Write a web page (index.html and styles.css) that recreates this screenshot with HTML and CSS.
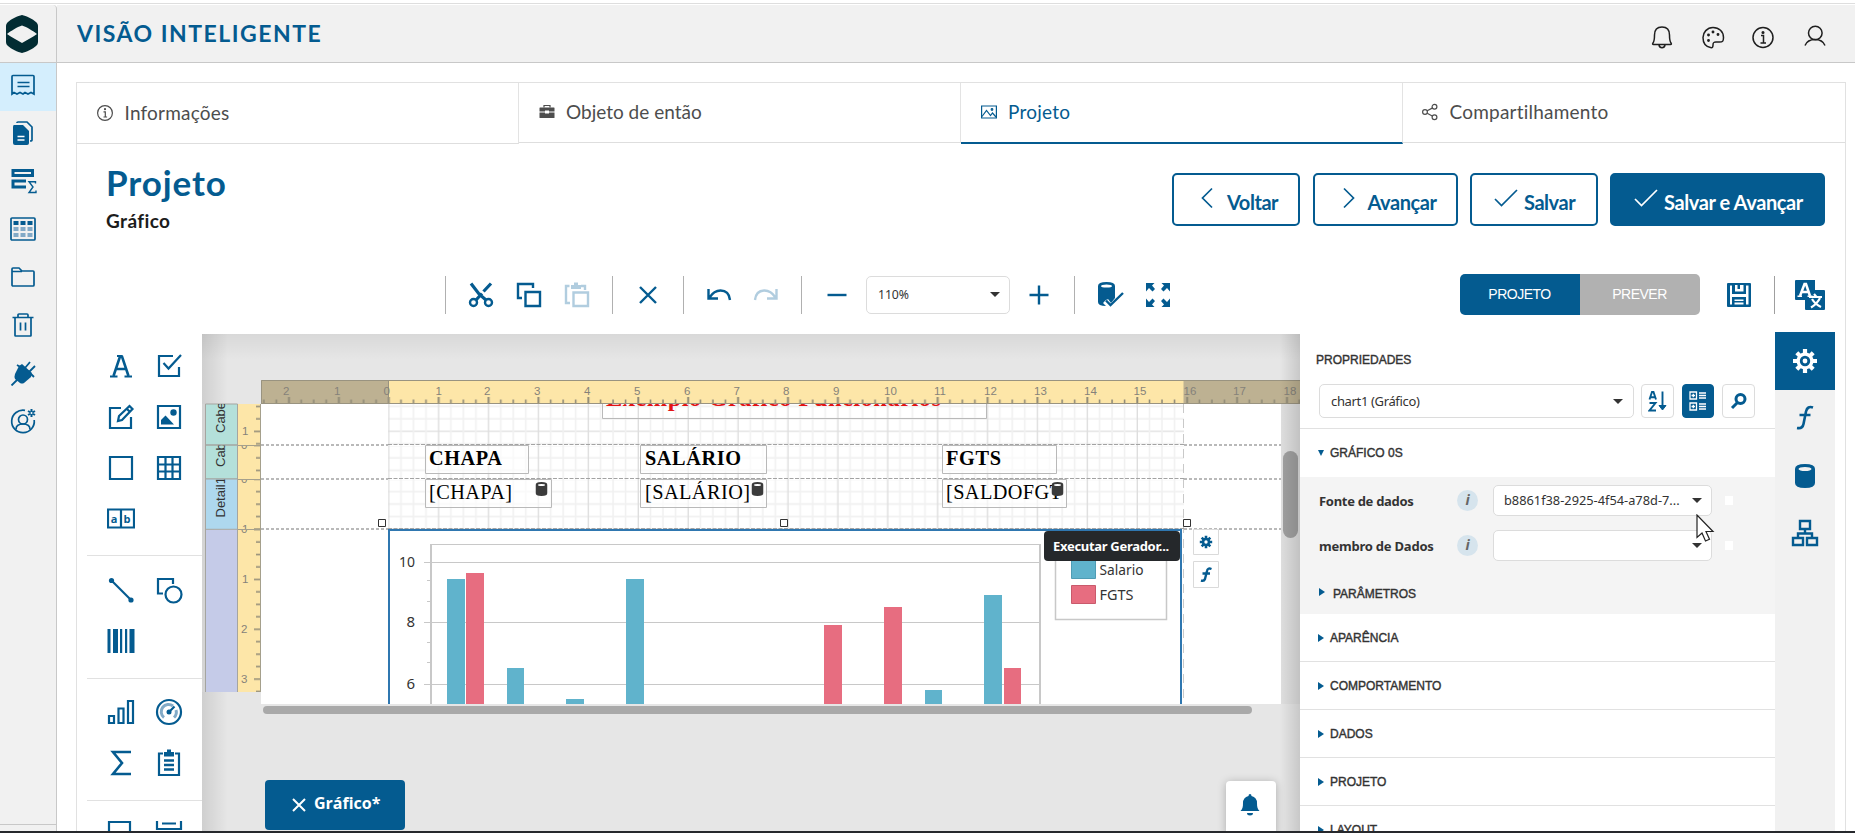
FILE: index.html
```html
<!DOCTYPE html>
<html lang="pt-BR">
<head>
<meta charset="utf-8">
<title>Visão Inteligente</title>
<link rel="stylesheet" href="styles.css">
</head>
<body>
<div class="app">
  <aside class="sidebar">
    <div class="logo">
      <svg width="32" height="38" viewBox="0 0 32 38"><path fill="#022c33" fill-rule="evenodd" d="M16 0C20 1 27 4 30 7c1 1 2 2 2 4v16c0 2-1 3-2 4-3 3-10 6-14 7-4-1-11-4-14-7-1-1-2-2-2-4V11c0-2 1-3 2-4C5 4 12 1 16 0zM1 19c4 3 10 6 15 9 5-3 11-6 15-9-4-3-10-7-15-8.500-5 1.500-11 5.500-15 8.500z"/></svg>
    </div>
    <nav class="side-nav">
      <a class="side-item active"><svg width="26" height="26" viewBox="0 0 26 26" class="ln"><path d="M2 22V4.500q0-1 1-1h20q1 0 1 1V22l-3-1.500-3 1.500-3-1.500-2 1.500-3-1.500-3 1.500-3-1.500z"/><path d="M7.500 10.500h12M7.500 14.500h12"/></svg></a>
      <a class="side-item"><svg width="26" height="26" viewBox="0 0 26 26"><path class="ln" d="M7 3q0-1 1-1h9l5 5v13q0 1-2 1"/><path fill="#045b90" d="M4 5h9l6 6v12q0 2-2 2H5q-2 0-2-2V7q0-2 1-2z"/><path stroke="#fff" stroke-width="1.500" d="M7.500 16.500h7M7.500 20h7"/></svg></a>
      <a class="side-item"><svg width="30" height="28" viewBox="0 0 30 28" fill="none" stroke="#045b90"><path stroke-width="3" d="M5 3.500h19.500v5H5z"/><path stroke-width="3" d="M18 14H5v6h13"/><path stroke-width="1.400" d="M27.500 16.500v-1.800H21l4 5.300-4 5.500h7v-2"/></svg></a>
      <a class="side-item"><svg width="28" height="26" viewBox="0 0 28 26"><rect class="ln" x="2" y="2" width="24" height="22" rx="1"/><path fill="#045b90" d="M4.500 5h5v4h-5zM11.500 5h5v4h-5zM18.500 5h5v4h-5z"/><path fill="#82aac7" d="M4.500 11h5v4h-5zM11.500 11h5v4h-5zM18.500 11h5v4h-5zM4.500 17h5v4h-5zM11.500 17h5v4h-5zM18.500 17h5v4h-5z"/></svg></a>
      <a class="side-item"><svg width="26" height="24" viewBox="0 0 26 24" class="ln"><path d="M2 20V4q0-1 1-1h6l3 3h11q1 0 1 1v13q0 1-1 1H3q-1 0-1-1zM2 6.500h10"/></svg></a>
      <a class="side-item"><svg width="26" height="26" viewBox="0 0 26 26" class="ln"><path d="M2.500 5.500h21M5 5.500v18q0 .5.500.5h15q.5 0 .5-.5v-18M8 5V3q0-1 1-1h8q1 0 1 1v2M10.500 10.500v8M15.500 10.500v8"/></svg></a>
      <a class="side-item"><svg width="26" height="26" viewBox="0 0 26 26"><path fill="#045b90" d="M9 6l3-2 10 9-1 4-7 6q-2 1-4 0l-5-4q-1-2 0-5z"/><path stroke="#045b90" stroke-width="1.800" d="M1.500 25.500l6-6M15 8l5-6M19 12l6-6M7 5l5 3M21 14l3 3"/></svg></a>
      <a class="side-item"><svg width="26" height="26" viewBox="0 0 26 26" class="ln"><path d="M15 2.300A11.300 11.300 0 1 0 24.200 12"/><circle cx="13" cy="11.500" r="4.500"/><path d="M6 21.500q0-5.500 7-5.500t7 5.500"/><path stroke-width="2" d="M21.500 1v8M18 3l7 4M25 3l-7 4"/><circle cx="21.500" cy="5" r="1" fill="#fff" stroke="none"/></svg></a>
    </nav>
    <div class="side-foot"></div>
  </aside>

  <div class="page">
    <header class="topbar">
      <h1 class="brand">VISÃO INTELIGENTE</h1>
      <div class="top-icons">
        <svg width="24" height="26" viewBox="0 0 24 26" class="dk"><path d="M3.500 20.500h17q1.500 0 .5-1.500-1.500-2-1.500-8Q19.500 3 12 3t-7.500 8q0 6-1.500 8-1 1.500.5 1.500zM9 21q.5 2.700 3 2.700t3-2.700"/></svg>
        <svg width="24" height="26" viewBox="0 0 24 26" class="dk"><path d="M9.500 23.500C4.500 22.500 2 18.500 2 13.500S6 3.500 12 3.500s10.500 4 10.500 10c0 4-1 4.500-4 4.500h-3.500c-2.500 0-3 .5-3 3 0 2-.5 3-2.500 2.500z"/><circle cx="7.500" cy="16.500" r=".7"/><circle cx="7.500" cy="11" r=".7"/><circle cx="12" cy="8" r=".7"/><circle cx="17" cy="10.500" r=".7"/></svg>
        <svg width="24" height="26" viewBox="0 0 24 26" class="dk"><circle cx="12" cy="13.500" r="10"/><path d="M10 11.500h2.500V19M9.500 19h5.500"/><circle cx="12" cy="8.500" r=".8"/></svg>
        <svg width="24" height="26" viewBox="0 0 24 26" class="dk user"><circle cx="12.300" cy="10" r="6.800"/><path d="M2 22.500q2.500-6 10-6t10 6"/></svg>
      </div>
    </header>

    <section class="panel">
      <nav class="tabs">
        <a class="tab first"><svg width="16" height="16" viewBox="0 0 16 16" class="gr"><circle cx="8" cy="8" r="7.400"/><path d="M6.500 6.800H8.300v5M6.500 12h3.600"/><circle cx="8" cy="4.200" r=".5"/></svg><span>Informações</span></a>
        <a class="tab"><svg width="16" height="16" viewBox="0 0 16 16" class="case"><path fill="#4d4d4d" d="M1 3.500h14q.5 0 .5.500v3.500H10v-1H6v1H.5V4q0-.5.500-.5zM.5 8.500H6v1h4v-1h5.500v5q0 .5-.5.500H1q-.5 0-.5-.5z"/><path d="M5 3.500v-2h6v2" fill="none" stroke="#4d4d4d" stroke-width="1.200"/></svg><span>Objeto de então</span></a>
        <a class="tab current"><svg width="16" height="16" viewBox="0 0 16 16" class="bl"><path d="M.6 2h14.800v12H.6z"/><path d="M1 12.500l4.500-6 4 5 2-2.500 3.500 4"/><circle cx="11" cy="5.500" r=".8"/></svg><span>Projeto</span></a>
        <a class="tab share"><svg width="16" height="18" viewBox="0 0 16 18" class="gr"><circle cx="3" cy="9" r="2.400"/><circle cx="12.500" cy="3.800" r="2.400"/><circle cx="12.500" cy="14.200" r="2.400"/><path d="M5.200 7.800l5-2.700M5.200 10.300l5 2.700"/></svg><span>Compartilhamento</span></a>
      </nav>

      <div class="titlebar">
        <div class="titles">
          <h2 class="title">Projeto</h2>
          <p class="subtitle">Gráfico</p>
        </div>
        <div class="actions">
          <button class="btn b1"><svg width="14" height="22" viewBox="0 0 14 22"><path d="M12 1.500L2.500 11 12 20.500"/></svg><span>Voltar</span></button>
          <button class="btn b2"><svg width="14" height="22" viewBox="0 0 14 22"><path d="M2 1.500L11.500 11 2 20.500"/></svg><span>Avançar</span></button>
          <button class="btn b3"><svg width="24" height="22" viewBox="0 0 24 22"><path d="M1 12l6.500 6.500L23 3"/></svg><span>Salvar</span></button>
          <button class="btn b4 primary"><svg width="24" height="22" viewBox="0 0 24 22"><path d="M1 12l6.500 6.500L23 3"/></svg><span>Salvar e Avançar</span></button>
        </div>
      </div>

      <div class="toolbar">
        <div class="tb-group g1">
          <svg width="26" height="26" viewBox="0 0 26 26" class="tb"><circle cx="5.500" cy="20.500" r="3.500"/><circle cx="20.500" cy="20.500" r="3.500"/><path stroke-width="3.200" d="M8 18L14 11.500M15.500 9.500L23 1.500M3 1.500L11 12l7 6"/></svg>
          <svg width="26" height="26" viewBox="0 0 26 26" class="tb"><path d="M6 16H2V2h15v4M9.500 10h14.500v14H9.500z"/></svg>
          <svg width="26" height="26" viewBox="0 0 26 26" class="tb dim"><path d="M6 21H2V4h3.500M17 4h4v4M9.500 10.500h14.500v13.500H9.500z"/><path fill="#b1cddf" stroke="none" d="M7 3h3V.5h4V3h3v4H7z"/></svg>
        </div>
        <div class="tb-group g2">
          <svg width="26" height="26" viewBox="0 0 26 26" class="tb"><path d="M5 5l16 16M21 5L5 21"/></svg>
        </div>
        <div class="tb-group g3">
          <svg width="26" height="26" viewBox="0 0 26 26" class="tb"><path d="M2.500 7v9.500H12M3.500 15.500Q8 8.500 14.500 8.500q8.500 0 9.500 9.500"/></svg>
          <svg width="26" height="26" viewBox="0 0 26 26" class="tb dim"><path d="M23.500 7v9.500H14M22.500 15.500Q18 8.500 11.500 8.500 3 8.500 2 18"/></svg>
        </div>
        <div class="tb-group g4">
          <svg width="20" height="26" viewBox="0 0 20 26" class="tb"><path d="M.5 13h19"/></svg>
          <div class="select zoom">110%<i class="caret"></i></div>
          <svg width="20" height="26" viewBox="0 0 20 26" class="tb"><path d="M.5 13h19M10 3.500v19"/></svg>
        </div>
        <div class="tb-group g5">
          <svg width="26" height="26" viewBox="0 0 26 26"><path fill="#045b90" d="M0 4q0-4 8.500-4T17 4v12l-4 5-3-4-5 4 3 3Q0 24 0 20z"/><ellipse cx="8.500" cy="4" rx="5.500" ry="1.600" fill="#fff"/><path fill="none" stroke="#fff" stroke-width="4" d="M7 19l5.500 5.500L25 12"/><path class="tb" d="M8 18.500l4.500 4.500L25 11"/></svg>
          <svg width="24" height="24" viewBox="0 0 24 24" fill="#045b90"><path d="M0 0h8.500L6 2.600 9 6 6.500 8.500 3 5 0 8.500zM24 0h-8.500L18 2.600 15 6l2.500 2.500L21 5l3 3.500zM0 24h8.500L6 21.400 9 18l-2.500-2.500L3 19l-3-3.500zM24 24h-8.500l2.500-2.600L15 18l2.500-2.500L21 19l3-3.500z"/></svg>
        </div>
        <div class="toggle"><span class="on">PROJETO</span><span>PREVER</span></div>
        <svg class="save" width="24" height="24" viewBox="0 0 24 24"><path fill="#045b90" fill-rule="evenodd" d="M1 0h22q1 0 1 1v22q0 1-1 1H1q-1 0-1-1V1q0-1 1-1zM3 2.500v19h2V14h14v7.500h2.500v-19H19V11H5V2.500zM8 2v6.500h8.500V2h-3.500v4h-2.500V2zM7.500 16.500V18h9v-1.500zM7.500 19.500v2h9v-2z"/></svg>
        <div class="lang"><svg width="30" height="30" viewBox="0 0 30 30"><path fill="#045b90" d="M1 0h19v10h9q1 0 1 1v18q0 1-1 1H11q-1 0-1-1v-9H1q-1 0-1-1V1q0-1 1-1z"/><path fill="none" stroke="#fff" stroke-width="2.500" d="M5 16L9.500 4h1.500L15 16M6.500 12h7"/><path stroke="#fff" stroke-width="1.500" d="M2.500 16.200H7M12.500 16.200h5"/><path fill="none" stroke="#fff" stroke-width="2.200" d="M14 17h13M19 14l2.500 3M25 18q-3 6-9 9.500M17 19q3 5 9 8"/></svg></div>
      </div>

      <div class="designer">
        <div class="toolbox">
          <div class="tool-group">
            <svg width="28" height="28" viewBox="0 0 28 28" class="tl"><path stroke-width="2.600" d="M6.500 24L13 4.500h2L21.500 24M9 17h10"/><path stroke-width="2" d="M3 24.500h7.500M17.500 24.500H25M10 4h5"/></svg>
            <svg width="28" height="28" viewBox="0 0 28 28" class="tl"><path d="M18 4H4v20h20v-9M8.500 11l5 5.500L26 3"/></svg>
            <svg width="28" height="28" viewBox="0 0 28 28" class="tl"><path d="M14 5H3v20h21v-11"/><path d="M11 18l1-5L22.500 3l3 3L15 17zM20 6l3 3"/></svg>
            <svg width="28" height="28" viewBox="0 0 28 28" class="tl"><path d="M3 3h22v22H3z"/><path fill="#045b90" stroke="none" d="M6 21.500V17l4.500-4.500L19 21.500z"/><circle cx="18.500" cy="9.500" r="3.200" fill="#045b90" stroke="none"/></svg>
            <svg width="28" height="28" viewBox="0 0 28 28" class="tl"><path d="M3 3h22v22H3z"/></svg>
            <svg width="28" height="28" viewBox="0 0 28 28" class="tl"><path d="M3 3h22v22H3zM10.500 3v22M17.500 3v22M3 10.500h22M3 17.500h22"/></svg>
            <svg width="28" height="28" viewBox="0 0 28 28" class="tl"><path d="M1 4.500h26v18H1zM14 4.500v18"/><text class="ab" x="3.800" y="18">a</text><text class="ab" x="16.500" y="18">b</text></svg>
          </div>
          <div class="tool-group">
            <svg width="28" height="28" viewBox="0 0 28 28" class="tl"><path d="M4.500 4.500L24 24"/><circle cx="4.500" cy="4.500" r="2.600" fill="#045b90" stroke="none"/><circle cx="24" cy="24" r="2.600" fill="#045b90" stroke="none"/></svg>
            <svg width="28" height="28" viewBox="0 0 28 28" class="tl"><path d="M8 17.500H3V3h15v5"/><circle cx="18.500" cy="18.500" r="8"/></svg>
            <svg width="28" height="28" viewBox="0 0 28 28" fill="#045b90"><path d="M.5 2h3v24h-3zM6 2h5v24H6zM13 2h2.200v24H13zM18 2h2.200v24H18zM22.500 2h5v24h-5z"/></svg>
          </div>
          <div class="tool-group third">
            <svg width="28" height="28" viewBox="0 0 28 28" class="tl"><path d="M2 18h5v7H2zM11.500 10.500h5V25h-5zM21 3h5v22h-5z"/></svg>
            <svg width="28" height="28" viewBox="0 0 28 28" class="tl"><circle cx="14" cy="14" r="12"/><path stroke="#82aac7" stroke-width="3" d="M9 19.500A7.300 7.300 0 0 1 18 8M21 12a7.300 7.300 0 0 1-2 7.500"/><circle cx="14" cy="14" r="2.500" fill="#045b90" stroke="none"/><path d="M14 14l5.500-5.500"/></svg>
            <svg width="28" height="28" viewBox="0 0 28 28" class="tl"><path stroke-width="2.600" d="M24 3H6l9 11-9 11h18"/></svg>
            <svg width="28" height="28" viewBox="0 0 28 28" class="tl"><path d="M8 4.500H4V26h20V4.500h-4"/><path stroke-width="2.600" d="M9 11.500h10M9 16h10M9 20.500h10"/><path fill="#045b90" stroke="none" d="M9 7.500V3h3V.5h4V3h3v4.500z"/></svg>
          </div>
          <div class="tool-group last">
            <svg width="28" height="28" viewBox="0 0 28 28" class="tl"><path d="M2 1h21v20H2z"/></svg>
            <svg width="28" height="28" viewBox="0 0 28 28" class="tl"><path d="M2 0v8h24V0M7 2.500h14"/></svg>
          </div>
        </div>

        <div class="workspace">
          <svg class="surface" width="1098" height="497" viewBox="202 334 1098 497">
            <defs>
              <pattern id="hticks" patternUnits="userSpaceOnUse" x="387.500" y="380" width="49.900" height="24"><path stroke="#8f8a77" stroke-width="2" d="M1.300 17v7"/><path stroke="#8f8a77" stroke-width="1.600" d="M13.500 19.500v5M26 19.500v5M38.500 19.500v5"/></pattern>
              <pattern id="vticks" patternUnits="userSpaceOnUse" x="238" y="0" width="23" height="49.850"><path stroke="#8f8a77" stroke-width="1.400" d="M16 .7h7M18 13.200h5M18 25.600h5M18 38.100h5"/></pattern>
              <pattern id="cols" patternUnits="userSpaceOnUse" x="387.500" y="0" width="49.900" height="50"><path stroke="#f1f1f1" stroke-width="1.600" d="M13.500 0v50M26 0v50M38.500 0v50"/><path stroke="#dedede" stroke-width="1.400" d="M1.300 0v50"/></pattern>
              <pattern id="rows" patternUnits="userSpaceOnUse" x="388" y="0" width="50" height="49.850"><path stroke="#dedede" stroke-width="1.200" d="M0 .7h50"/><path stroke="#efefef" stroke-width="1.600" d="M0 13.200h50M0 25.600h50M0 38.100h50"/></pattern>
              <pattern id="r1" href="#rows" y="430.600"/><pattern id="r2" href="#rows" y="444.700"/><pattern id="r3" href="#rows" y="478.500"/>
              <pattern id="v1" href="#vticks" y="430.600"/><pattern id="v2" href="#vticks" y="444.700"/><pattern id="v3" href="#vticks" y="478.500"/><pattern id="v4" href="#vticks" y="528.800"/>
              <clipPath id="s1"><path d="M205 404h56v41h-56z"/></clipPath>
              <clipPath id="s2"><path d="M205 445.500h56V479h-56z"/></clipPath>
              <clipPath id="s3"><path d="M205 479.500h56V529h-56z"/></clipPath>
              <clipPath id="s4"><path d="M205 529.500h56V692h-56z"/></clipPath>
              <clipPath id="pg"><path d="M261 404h1020v300H261z"/></clipPath>
              <linearGradient id="shl"><stop offset="0" stop-color="#000" stop-opacity=".1"/><stop offset="1" stop-color="#000" stop-opacity="0"/></linearGradient>
              <linearGradient id="shr" x1="1" x2="0"><stop offset="0" stop-color="#000" stop-opacity=".13"/><stop offset="1" stop-color="#000" stop-opacity="0"/></linearGradient>
              <linearGradient id="sht" x2="0" y2="1"><stop offset="0" stop-color="#000" stop-opacity=".06"/><stop offset="1" stop-color="#000" stop-opacity="0"/></linearGradient>
              <symbol id="db" viewBox="0 0 12 14"><path fill="#3b3b3b" d="M0 3q0-3 6-3t6 3v8q0 3-6 3t-6-3z"/><ellipse cx="6" cy="3" rx="3.500" ry="1" fill="#fff"/></symbol>
            </defs>
            <rect x="202" y="334" width="1098" height="497" fill="#e6e6e6"/>
            <rect x="202" y="334" width="1098" height="26" fill="url(#sht)"/>
            <rect x="202" y="334" width="26" height="497" fill="url(#shl)"/>

            <rect x="202" y="404" width="3.500" height="288" fill="#d4d4d4"/>
            <g stroke="#a5a5a0" stroke-width="1">
              <path fill="#b4e0da" d="M205.500 404h32v41h-32zM205.500 445h32v34h-32z"/>
              <path fill="#aed8ee" d="M205.500 479h32v50.300h-32z"/>
              <path fill="#c5cbe8" stroke="none" d="M206 530h31.500v162H206z"/>
              <path fill="none" d="M205.500 529v163M237.500 404v288"/>
            </g>
            <rect x="238" y="404" width="23" height="288" fill="#fde6a8"/>
            <g clip-path="url(#s1)"><rect x="238" y="404" width="23" height="41" fill="url(#v1)"/><text class="num" x="242" y="435">1</text><text class="band" transform="translate(225 433) rotate(-90)">Cabeçalho</text></g>
            <g clip-path="url(#s2)"><rect x="238" y="445" width="23" height="34" fill="url(#v2)"/><text class="num" x="241" y="449">0</text><text class="band" transform="translate(225 467) rotate(-90)">Cabeçalho</text></g>
            <g clip-path="url(#s3)"><rect x="238" y="479" width="23" height="50" fill="url(#v3)"/><text class="num" x="241" y="483">0</text><text class="num" x="242" y="533">1</text><text class="band" transform="translate(225 517.500) rotate(-90)">Detail1</text></g>
            <g clip-path="url(#s4)"><rect x="238" y="529" width="23" height="163" fill="url(#v4)"/><text class="num" x="241" y="533">0</text><text class="num" x="242" y="583">1</text><text class="num" x="241" y="633">2</text><text class="num" x="241" y="683">3</text></g>
            <path stroke="#a5a08c" d="M238 445.500h23M238 479.500h23M238 529.500h23M260.500 404v288" fill="none"/>

            <rect x="1281" y="404" width="19" height="300" fill="#dfdfdf"/>
            <rect x="261" y="404" width="1020" height="300" fill="#fff"/>
            <g clip-path="url(#pg)">
              <path fill="url(#r1)" d="M388 404h796v41H388z"/><path fill="url(#r2)" d="M388 446h796v33H388z"/><path fill="url(#r3)" d="M388 480h796v49H388z"/>
              <rect x="388" y="404" width="796" height="125" fill="url(#cols)"/>
              <path stroke="#c9c9c9" stroke-dasharray="9 6" d="M1183.500 404v300"/>
              <path stroke="#a3a3a3" stroke-width="1.600" stroke-dasharray="3 2" d="M261 445h127M261 479h127M261 529h127M1184 445h97M1184 479h97M1184 529h97"/>
              <path stroke="#a3a3a3" stroke-dasharray="4 1.500" d="M388 444.500h796M388 478.500h796M388 528.500h796"/>
              <path fill="none" stroke="#b9b9b9" d="M602.500 400v18.500h384V400"/>
              <text class="rpt red" x="606" y="406" textLength="335">Exemplo Gráfico Funcionários</text>
              <path fill="#fff" fill-opacity=".6" stroke="#b9b9b9" d="M425.500 445.500h103v28h-103zM425.500 479.500h126v28h-126zM640.500 445.500h126v28h-126zM640.500 479.500h126v28h-126zM942.500 445.500h114v28h-114zM942.500 479.500h124v28h-124z"/>
              <text class="rpt b" x="429" y="465" textLength="73">CHAPA</text>
              <text class="rpt b" x="645" y="465" textLength="96">SALÁRIO</text>
              <text class="rpt b" x="946" y="465" textLength="55">FGTS</text>
              <text class="rpt" x="429" y="499" textLength="83">[CHAPA]</text>
              <text class="rpt" x="645" y="499" textLength="105">[SALÁRIO]</text>
              <text class="rpt" x="946" y="499" textLength="116">[SALDOFGT</text>
              <use href="#db" x="535.500" y="482" width="12" height="14"/><use href="#db" x="751.500" y="482" width="12" height="14"/><use href="#db" x="1051.500" y="482" width="12" height="14"/>

              <path fill="#fff" stroke="#2f77b0" stroke-width="2" d="M389 760V530h792v230z"/>
              <g fill="none" stroke="#c8c8c8">
                <path d="M431 544.500h609M424 562.500h616M424 622.500h616M424 684.500h616M427 580.500h4M427 601.500h4M427 642.500h4M427 662.500h4"/>
                <path stroke-width="2" d="M431 544v180M1040 544v180"/>
                <path stroke-width="1.500" d="M1055.500 550v69.500h111V550z"/>
              </g>
              <g class="axis" text-anchor="end"><text x="415" y="567" textLength="16" lengthAdjust="spacingAndGlyphs">10</text><text x="415" y="627">8</text><text x="415" y="689">6</text></g>
              <path fill="#60b3cc" d="M447 579h18v130h-18zM507 668h17v40h-17zM566 699h18v9h-18zM626 579h18v130h-18zM925 690h17v20h-17zM984 595h18v120h-18z"/>
              <path fill="#e76d80" d="M466 573h18v140h-18zM824 625h18v90h-18zM884 607h18v100h-18zM1004 668h17v50h-17z"/>
              <path fill="#60b3cc" stroke="#4f9cb4" d="M1071.500 560.500h24v18h-24z"/><path fill="#e76d80" stroke="#c95a6c" d="M1071.500 585.500h24v18h-24z"/>
              <g class="axis"><text x="1099.500" y="575" textLength="44" lengthAdjust="spacingAndGlyphs">Salario</text><text x="1099.500" y="600" textLength="34" lengthAdjust="spacingAndGlyphs">FGTS</text></g>
              <g fill="#fff" stroke="#333"><path d="M378.500 519.500h7v7h-7zM780.500 519.500h7v7h-7zM1183.500 519.500h7v7h-7z"/></g>
              <path fill="#fff" stroke="#dadada" d="M1193.500 529.500h25v25h-25zM1193.500 561.500h25v26h-25z"/>
              <g transform="translate(1206 542)"><path stroke="#045b90" stroke-width="2.600" d="M0-6.200V6.200M-6.200 0H6.200M-4.300-4.300L4.300 4.300M-4.300 4.300L4.300-4.300"/><circle r="4.200" fill="#045b90"/><circle r="1.700" fill="#fff"/></g>
              <path fill="none" stroke="#045b90" stroke-width="2.400" d="M1211.500 569q-4-1.500-4.500 2l-2 8q-1 2.500-4 1.500M1202.500 573.500h7.500"/>
            </g>

            <rect x="261" y="380" width="1039" height="24" fill="#fde6a8"/>
            <path fill="#bdb192" d="M261 380h127.500v24H261zM1183.500 380H1300v24h-116.500z"/>
            <rect x="261" y="380" width="1039" height="24" fill="url(#hticks)"/>
            <path stroke="#999380" fill="none" d="M261.500 404v-23.500H1300M261 403.500h1039M388.500 380v24"/>
            <g class="num"><text x="283" y="394.500">2</text><text x="334" y="394.500">1</text><text x="383.500" y="394.500">0</text><text x="435.500" y="394.500">1</text><text x="484" y="394.500">2</text><text x="534" y="394.500">3</text><text x="584" y="394.500">4</text><text x="634" y="394.500">5</text><text x="684" y="394.500">6</text><text x="733.500" y="394.500">7</text><text x="783" y="394.500">8</text><text x="833" y="394.500">9</text><text x="884" y="394.500">10</text><text x="934" y="394.500">11</text><text x="984" y="394.500">12</text><text x="1034" y="394.500">13</text><text x="1084" y="394.500">14</text><text x="1133.500" y="394.500">15</text><text x="1183.500" y="394.500">16</text><text x="1233" y="394.500">17</text><text x="1283.500" y="394.500">18</text></g>

            <rect x="1283" y="451" width="15" height="87" rx="7.500" fill="#a0a0a0"/>
            <rect x="263" y="706" width="989" height="8" rx="4" fill="#a9a9a9"/>
            <rect x="1280" y="334" width="20" height="497" fill="url(#shr)"/>
          </svg>
          <div class="tip">Executar Gerador...</div>
          <div class="doc-tab"><svg width="14" height="14" viewBox="0 0 14 14"><path stroke="#fff" stroke-width="2" d="M1 1l12 12M13 1L1 13"/></svg><span>Gráfico*</span></div>
          <div class="bell"><svg width="20" height="22" viewBox="0 0 20 22" fill="#045b90"><path d="M10 0q1.500 0 1.500 2Q17 3.500 17 9c0 4 .5 6 2.500 8H.5C2.500 15 3 13 3 9q0-5.500 5.500-7 0-2 1.500-2zM7 19h6q0 2.500-3 2.500T7 19z"/></svg></div>
        </div>

        <div class="props">
          <div class="props-head">
            <h3 class="caps">PROPRIEDADES</h3>
            <div class="props-row">
              <div class="select obj">chart1 (Gráfico)<i class="caret"></i></div>
              <button class="ib"><svg width="20" height="22" viewBox="0 0 20 22" fill="none" stroke="#045b90" stroke-width="1.900"><path d="M1.500 9.500L4 2h1.500L8 9.500M2.500 7.200H7M1.500 13H7.500L1.500 20.500H8M14.500 1.500v16"/><path d="M11 15.500h7l-3.500 4.500z" fill="#045b90" stroke-width="1"/></svg></button>
              <button class="ib dark"><svg width="18" height="22" viewBox="0 0 18 22" fill="none" stroke="#fff" stroke-width="1.300"><path d="M1 2h6.500v7H1zM1 13h6.500v7H1zM2.500 5.500H6M4.300 3.800v3.500M2.500 16.500H6M4.300 14.800v3.500M10 3h7M10 5.500h7M10 8h7M10 14h7M10 16.500h7M10 19h7"/></svg></button>
              <button class="ib"><svg width="18" height="18" viewBox="0 0 18 18" fill="none" stroke="#045b90" stroke-width="3"><circle cx="10.500" cy="7" r="4.500"/><path d="M7.500 10.500L2 16"/></svg></button>
            </div>
          </div>
          <div class="acc open"><i class="tri down"></i><span class="caps">GRÁFICO 0S</span></div>
          <div class="fields">
            <div class="field"><label>Fonte de dados</label><b class="info">i</b><div class="select val"><span>b8861f38-2925-4f54-a78d-7...</span><i class="caret"></i></div><i class="sq"></i></div>
            <div class="field"><label class="wide">membro de Dados</label><b class="info">i</b><div class="select val"><i class="caret"></i></div><i class="sq"></i></div>
            <div class="subacc"><i class="tri"></i><span class="caps">PARÂMETROS</span></div>
          </div>
          <div class="acc"><i class="tri"></i><span class="caps">APARÊNCIA</span></div>
          <div class="acc"><i class="tri"></i><span class="caps">COMPORTAMENTO</span></div>
          <div class="acc"><i class="tri"></i><span class="caps">DADOS</span></div>
          <div class="acc"><i class="tri"></i><span class="caps">PROJETO</span></div>
          <div class="acc"><i class="tri"></i><span class="caps">LAYOUT</span></div>
        </div>

        <div class="side-tabs">
          <div class="st on"><svg width="26" height="26" viewBox="-13 -13 26 26"><path stroke="#fff" stroke-width="4.200" d="M0-12V12M-12 0H12M-8.200-8.200L8.200 8.200M-8.200 8.200L8.200-8.200"/><circle r="8.500" fill="#fff"/><circle r="5.200" fill="#045b90"/><circle r="2.400" fill="#fff"/></svg></div>
          <div class="st"><svg width="20" height="26" viewBox="0 0 20 26" fill="none" stroke="#045b90" stroke-width="2.600"><path d="M18 2.500q-5.500-2-7 4L8.500 19q-1 5-6.500 4M4.500 10h11"/></svg></div>
          <div class="st"><svg width="20" height="24" viewBox="0 0 20 24"><path fill="#045b90" d="M0 5q0-5 10-5t10 5v14q0 5-10 5T0 19z"/><ellipse cx="10" cy="5" rx="6.500" ry="2" fill="#f1f1f1"/></svg></div>
          <div class="st"><svg width="28" height="28" viewBox="0 0 28 28" fill="none" stroke="#045b90" stroke-width="2.400"><path d="M9 2h10v8H9zM2 19h10v7H2zM16 19h10v7H16zM14 10v5M7 19v-4.500h14V19"/></svg></div>
        </div>
      </div>
    </section>
  </div>
  <svg class="cursor" width="20" height="30" viewBox="0 0 20 30"><path fill="#fff" stroke="#222" stroke-width="1.200" d="M1 1v22.500l5-4.500 3.500 8 4-1.800L10 17.500h7z"/></svg>
</div>
</body>
</html>
```

FILE: styles.css
```css
* { box-sizing: border-box; }
body { margin: 0; background: #fff; font-family: Lato, "Liberation Sans", sans-serif; }
h1, h2, h3, p { margin: 0; }
svg { display: block; flex: none; }
button { font: inherit; padding: 0; margin: 0; }

.app { position: relative; width: 1855px; height: 833px; overflow: hidden; display: flex; padding-top: 5px; border-bottom: 2px solid #26282c; }
.app::before { content: ""; position: absolute; left: 0; right: 0; top: 3px; height: 1px; background: #dedede; }

/* left navigation */
.sidebar { width: 57px; flex: none; background: #f1f1f1; border-right: 1px solid #c8c8c8; border-top-right-radius: 4px; display: flex; flex-direction: column; }
.logo { height: 58px; border-bottom: 1px solid #c8c8c8; padding: 10px 0 0 6px; }
.side-nav { flex: 1; }
.side-item { height: 48px; display: flex; align-items: center; justify-content: center; padding: 0 11px 4px 0; }
.side-item.active { background: #d4eefd; }
.side-foot { height: 7px; border-top: 1px solid #c8c8c8; }
.ln { fill: none; stroke: #045b90; stroke-width: 1.7; }

/* header */
.page { flex: 1; min-width: 0; display: flex; flex-direction: column; }
.topbar { height: 58px; flex: none; background: #f1f1f1; border-bottom: 1px solid #c8c8c8; display: flex; justify-content: space-between; align-items: flex-start; padding: 14px 28px 0 20px; }
.brand { font-size: 23px; line-height: 28px; font-weight: 700; letter-spacing: 1.500px; color: #045b90; white-space: nowrap; }
.top-icons { display: flex; gap: 26.200px; padding-top: 5px; }
.dk { fill: none; stroke: #1f1f1f; stroke-width: 1.500; }
.user { margin: -1px 0 0 2px; }

.panel { flex: 1; min-height: 0; margin: 19px 9px 0 19px; border: 1px solid #e1e1e1; border-bottom: 0; display: flex; flex-direction: column; }
.tabs { display: grid; grid-template-columns: repeat(4, 442px); height: 61px; flex: none; }
.tab { height: 60px; border-right: 1px solid #e3e3e3; border-bottom: 1px solid #dedede; display: flex; align-items: center; gap: 11px; padding: 0 0 3px 20px; font-size: 19px; color: #4d4d4d; white-space: nowrap; }
.tab:last-child { border-right: 0; }
.tab.first { height: 61px; padding-bottom: 1px; letter-spacing: .2px; gap: 11.500px; }
.tab.current { height: 61px; border-bottom: 2px solid #045b90; color: #045b90; letter-spacing: .25px; }
.tab.share { padding-left: 19px; letter-spacing: .22px; gap: 11.500px; }
.tab .bl, .tab .case, .share .gr { margin-top: 2px; }
.gr { fill: none; stroke: #4d4d4d; stroke-width: 1.200; }
.bl { fill: none; stroke: #045b90; stroke-width: 1.200; }

/* title row */
.titlebar { display: flex; justify-content: space-between; height: 100px; padding: 18px 20px 0 29px; flex: none; }
.title { font: 700 35px/40px Lato, sans-serif; letter-spacing: .9px; color: #045b90; }
.subtitle { font-size: 19px; line-height: 22px; font-weight: 700; color: #1c1c1c; margin-top: 8px; letter-spacing: .4px; }
.actions { display: flex; gap: 12.500px; padding-top: 11px; }
.btn { height: 53px; border: 2px solid #045b90; border-radius: 5px; background: #fff; color: #045b90; display: flex; justify-content: flex-start; align-items: flex-start; font-size: 20px; font-weight: 700; letter-spacing: -.45px; line-height: 24px; white-space: nowrap; }
.btn svg { fill: none; stroke: currentColor; stroke-width: 1.700; margin-top: 12px; }
.btn span { margin-top: 15px; }
.b1 { width: 128px; gap: 13px; padding-left: 26px; }
.b2 { width: 145px; gap: 12px; padding-left: 27px; }
.b3 { width: 127.500px; gap: 6px; padding-left: 22px; }
.b4 { width: 215px; gap: 6px; padding-left: 22px; letter-spacing: -.4px; }
.btn.primary { background: #045b90; color: #fff; }

/* toolbar */
.toolbar { display: flex; align-items: center; height: 88px; flex: none; padding: 14px 0 0 368px; }
.tb-group { display: flex; align-items: center; height: 38px; border-left: 1px solid #b0b0b0; }
.tb { fill: none; stroke: #045b90; stroke-width: 2.400; }
.dim { stroke: #b1cddf; }
.g1 { width: 167px; padding-left: 22px; gap: 22px; }
.g2 { width: 71px; padding-left: 22px; }
.g3 { width: 118px; padding-left: 22px; gap: 21px; }
.g4 { width: 273px; padding-left: 25px; gap: 19px; }
.g5 { width: 386px; padding-left: 23px; gap: 22px; }
.select { position: relative; border: 1px solid #dcdcdc; border-radius: 5px; background: #fff; display: flex; align-items: center; justify-content: space-between; font: 13px "Noto Sans", sans-serif; color: #333; white-space: nowrap; }
.caret { border: 5px solid transparent; border-top: 5px solid #333; border-bottom: 0; }
.zoom { width: 144px; height: 38px; padding: 0 9px 2px 11px; font-size: 12.300px; letter-spacing: -.1px; }
.toggle { display: flex; width: 240px; height: 41px; margin-top: -1px; border-radius: 5px; overflow: hidden; font: 14px "Liberation Sans", sans-serif; color: #fff; flex: none; }
.toggle span { flex: 1; background: #b1b1b1; display: flex; align-items: center; justify-content: center; letter-spacing: -.5px; padding: 0 1px 2px 0; }
.toggle .on { background: #045b90; }
.save { margin: 0 23px 0 27px; }
.lang { height: 38px; border-left: 1px solid #9f9f9f; padding: 4px 0 0 20px; }

/* designer */
.designer { flex: 1; min-height: 0; display: grid; grid-template-columns: 125px 1098px 475px 60px; overflow: hidden; }
.toolbox { padding: 8px 0 0 10px; overflow: hidden; }
.tool-group { display: grid; grid-template-columns: 48px 48px; grid-auto-rows: 51px; padding: 8px 0 12px 10px; border-bottom: 1px solid #e1e1e1; align-items: center; justify-items: center; }
.tool-group:first-child { padding: 0 0 11px 10px; }
.tool-group.third { padding: 7px 0 12px 10px; }
.tool-group.last { border: 0; }
.tl { fill: none; stroke: #045b90; stroke-width: 2.200; }
.ab { font: 700 11px "Open Sans", sans-serif; fill: #045b90; stroke: none; }
.workspace { position: relative; overflow: hidden; margin-top: 2px; }
.num { font: 11.500px "Liberation Sans", sans-serif; fill: #85827a; }
.band { font: 13px "Liberation Sans", sans-serif; fill: #333; }
.rpt { font: 20.300px "Liberation Serif", serif; fill: #000; }
.rpt.b { font-weight: 700; }
.rpt.red { font-weight: 700; font-size: 24.500px; fill: #e31313; }
.axis { font: 15px "Noto Sans", sans-serif; fill: #333; }
.tip { position: absolute; left: 842px; top: 197px; width: 136px; height: 30px; border-radius: 4px; background: #25282b; color: #fff; font: 700 13px/30px "Noto Sans", sans-serif; letter-spacing: -.3px; padding-left: 9px; white-space: nowrap; }
.doc-tab { position: absolute; left: 63px; top: 446px; width: 140px; height: 50px; border-radius: 4px; background: #045b90; color: #fff; display: flex; align-items: center; gap: 8px; padding: 0 0 4px 27px; font: 700 16px "Open Sans", sans-serif; }
.doc-tab svg { margin-top: 3px; }
.bell { position: absolute; left: 1024px; top: 447px; width: 50px; height: 55px; border-radius: 4px; background: #fff; box-shadow: 0 1px 8px rgba(0,0,0,.25); padding: 13px 0 0 14px; }

/* properties */
.props { background: #fff; overflow: hidden; }
.props-head { height: 97px; border-bottom: 1px solid #e1e1e1; padding: 20px 0 0 16px; }
.caps { font: 12px/16px "Liberation Sans", sans-serif; color: #333; -webkit-text-stroke: .4px #333; }
.props-row { display: flex; align-items: center; padding: 16px 0 0 3px; }
.obj { width: 315px; height: 34px; padding: 0 10px 0 11px; margin-right: 7px; font-size: 13px; letter-spacing: -.35px; }
.ib { width: 33px; height: 34px; border: 1px solid #dcdcdc; border-radius: 4px; background: #fff; display: flex; align-items: center; justify-content: center; margin-right: 8px; }
.ib.dark { background: #045b90; border-color: #045b90; width: 32px; }
.acc { height: 48px; display: flex; align-items: center; gap: 6px; padding-left: 18px; border-bottom: 1px solid #e1e1e1; }
.acc.open { border: 0; padding-bottom: 0; }
.tri { width: 0; height: 0; border: 4px solid transparent; border-left: 6px solid #045b90; border-right: 0; }
.tri.down { border: 3px solid transparent; border-top: 6px solid #045b90; border-bottom: 0; }
.fields { height: 137px; background: #f4f4f4; padding: 8px 0 0 19px; }
.field { display: flex; align-items: center; height: 31px; margin-bottom: 14px; }
.field label { width: 139px; font: 700 13px "Noto Sans", sans-serif; letter-spacing: -.3px; color: #333; }
.field label.wide { letter-spacing: -.22px; }
.info { width: 21px; height: 21px; border-radius: 50%; background: #d6e4ed; font: italic 700 14px/20px "Noto Sans", sans-serif; color: #666; text-align: center; margin: 0 15px 0 -1px; }
.val { width: 219px; height: 31px; padding: 0 9px 1px 10px; justify-content: flex-start; font-size: 12.800px; letter-spacing: 0; }
.val .caret { margin-left: auto; }
.sq { width: 8px; height: 9px; background: #fff; margin-left: 13px; }
.subacc { display: flex; align-items: center; gap: 8px; padding: 11px 0 0 0; }
.subacc .tri { margin-bottom: 4px; }
.side-tabs { background: #f1f1f1; display: flex; flex-direction: column; }
.st { height: 57.500px; display: flex; align-items: center; justify-content: center; }
.st.on { background: #045b90; }

.cursor { position: absolute; left: 1696px; top: 514px; }
```
